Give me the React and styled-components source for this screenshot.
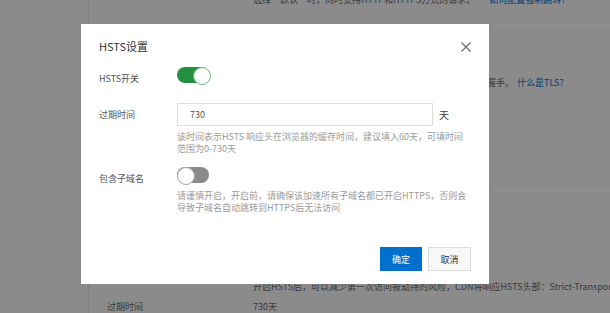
import styled, { createGlobalStyle } from "styled-components";

const GlobalStyle = createGlobalStyle`
  * {
    box-sizing: border-box;
  }
  body {
    margin: 0;
    overflow: hidden;
    font-family: "Noto Sans CJK SC", "Noto Sans", sans-serif;
    color: #333;
  }
`;

const Page = styled.div`
  display: flex;
  height: 313px;
  background: #f5f5f5;
  overflow: hidden;
`;

const Sidebar = styled.div`
  width: 89px;
  flex-shrink: 0;
  border-right: 1px solid #dedede;
`;

const Main = styled.div`
  flex: 1;
  display: flex;
  flex-direction: column;
  min-width: 0;
`;

const Section = styled.div`
  flex-shrink: 0;
  height: ${(p) => p.$height}px;
  padding: ${(p) => p.$top || 0}px 0 0 18px;
  border-bottom: 1px solid #fff;
  overflow: hidden;
`;

const InfoRow = styled.div`
  display: grid;
  grid-template-columns: 146px 1fr;
  font-size: 9px;
  line-height: 12px;
  color: #666;
  white-space: nowrap;
  margin-top: ${(p) => p.$gap || 0}px;
`;

const Link = styled.a`
  color: #0070cc;
  text-decoration: none;
  margin-left: ${(p) => p.$gap || 0}px;
`;

const Overlay = styled.div`
  position: fixed;
  inset: 0;
  background: rgba(0, 0, 0, 0.43);
`;

const Dialog = styled.div`
  position: absolute;
  left: 81px;
  top: 24px;
  width: 408px;
  height: 260px;
  background: #fff;
  padding: 14px 18px 13px;
  display: flex;
  flex-direction: column;
`;

const Header = styled.div`
  display: flex;
  justify-content: space-between;
  align-items: center;
  height: 16px;
`;

const Title = styled.h3`
  margin: 0;
  font-size: 11px;
  font-weight: 400;
  color: #333;
  line-height: 16px;
`;

const CloseButton = styled.button`
  border: 0;
  padding: 0;
  background: none;
  width: 10px;
  height: 10px;
  margin-top: 2px;
  display: flex;
  cursor: pointer;
`;

const Form = styled.div`
  margin-top: 13px;
`;

const FormRow = styled.div`
  display: grid;
  grid-template-columns: 78px 1fr;
  margin-top: ${(p) => p.$gap || 0}px;
`;

const Label = styled.div`
  font-size: 9px;
  line-height: 12px;
  color: #555;
  padding-top: 6px;
`;

const Control = styled.div`
  display: flex;
  flex-direction: column;
`;

const Switch = styled.div`
  position: relative;
  width: 32px;
  height: 16px;
  border-radius: 8px;
  background: ${(p) => (p.$on ? "#22903f" : "#8a8a8a")};

  &::after {
    content: "";
    position: absolute;
    top: 0;
    left: ${(p) => (p.$on ? "16px" : "0")};
    width: 16px;
    height: 16px;
    border-radius: 50%;
    background: #fff;
    border: 1px solid ${(p) => (p.$on ? "#5fb876" : "#a5a5a5")};
  }
`;

const InputLine = styled.div`
  display: flex;
  align-items: center;
`;

const TextInput = styled.input`
  width: 256px;
  height: 23px;
  border: 1px solid #dcdcdc;
  padding: 0 12px;
  font-family: inherit;
  font-size: 9px;
  color: #555;
  outline: none;
`;

const Unit = styled.span`
  margin-left: 6px;
  font-size: 10px;
  color: #444;
`;

const Help = styled.div`
  margin-top: ${(p) => p.$gap}px;
  font-size: 9px;
  line-height: 12px;
  color: #9a9a9a;
  white-space: nowrap;
`;

const Footer = styled.div`
  margin-top: auto;
  display: flex;
  justify-content: flex-end;
  gap: 6px;
`;

const Button = styled.button`
  height: 24px;
  width: ${(p) => (p.$primary ? 42 : 43)}px;
  padding: 0;
  font-family: inherit;
  font-size: 9px;
  border: 1px solid ${(p) => (p.$primary ? "#0070cc" : "#dcdcdc")};
  background: ${(p) => (p.$primary ? "#0070cc" : "#f7f7f7")};
  color: ${(p) => (p.$primary ? "#fff" : "#333")};
  cursor: pointer;
`;

const CloseIcon = () => (
  <svg width="10" height="10" viewBox="0 0 10 10">
    <path d="M0.5 0.5L9.5 9.5M9.5 0.5L0.5 9.5" stroke="#666" strokeWidth="1.1" fill="none" />
  </svg>
);

export default function App() {
  return (
    <>
      <GlobalStyle />
      <Page>
        <Sidebar />
        <Main>
          <Section $height={25}>
            <InfoRow $gap={-6}>
              <span />
              <span>
                选择“默认”时，同时支持HTTP和HTTPS方式的请求。
                <Link $gap={14}>如何配置强制跳转?</Link>
              </span>
            </InfoRow>
          </Section>
          <Section $height={167} $top={52}>
            <InfoRow>
              <span>TLS1.3</span>
              <span>
                开启后将支持最新的安全传输层协议版本，可有效减少一次握手。
                <Link $gap={3}>什么是TLS?</Link>
              </span>
            </InfoRow>
          </Section>
          <Section $height={130} $top={18}>
            <InfoRow>
              <span>HSTS</span>
              <span>已开启</span>
            </InfoRow>
            <InfoRow $gap={59}>
              <span />
              <span>
                开启HSTS后，可以减少第一次访问被劫持的风险，CDN将响应HSTS头部：Strict-Transport-Security
              </span>
            </InfoRow>
            <InfoRow $gap={8}>
              <span>过期时间</span>
              <span>730天</span>
            </InfoRow>
          </Section>
        </Main>
      </Page>
      <Overlay>
        <Dialog>
          <Header>
            <Title>HSTS设置</Title>
            <CloseButton aria-label="关闭">
              <CloseIcon />
            </CloseButton>
          </Header>
          <Form>
            <FormRow>
              <Label>HSTS开关</Label>
              <Control>
                <Switch $on />
              </Control>
            </FormRow>
            <FormRow $gap={18}>
              <Label>过期时间</Label>
              <Control>
                <InputLine>
                  <TextInput defaultValue="730" readOnly />
                  <Unit>天</Unit>
                </InputLine>
                <Help $gap={5}>
                  <div>该时间表示HSTS 响应头在浏览器的缓存时间，建议填入60天，可填时间</div>
                  <div>范围为0-730天</div>
                </Help>
              </Control>
            </FormRow>
            <FormRow $gap={12}>
              <Label>包含子域名</Label>
              <Control>
                <Switch />
                <Help $gap={7}>
                  <div>请谨慎开启，开启前，请确保该加速所有子域名都已开启HTTPS，否则会</div>
                  <div>导致子域名自动跳转到HTTPS后无法访问</div>
                </Help>
              </Control>
            </FormRow>
          </Form>
          <Footer>
            <Button $primary>确定</Button>
            <Button>取消</Button>
          </Footer>
        </Dialog>
      </Overlay>
    </>
  );
}
